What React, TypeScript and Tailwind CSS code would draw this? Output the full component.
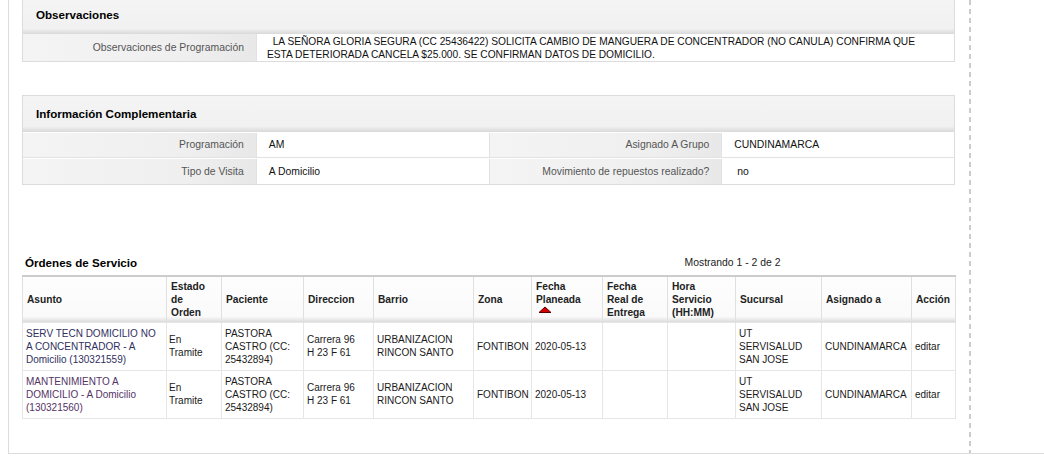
const headers: { label: React.ReactNode; w: string }[] = [
  { label: "Asunto", w: "w-[144px]" },
  { label: <>Estado<br />de<br />Orden</>, w: "w-[55px]" },
  { label: "Paciente", w: "w-[82px]" },
  { label: "Direccion", w: "w-[70px]" },
  { label: "Barrio", w: "w-[100px]" },
  { label: "Zona", w: "w-[58px]" },
  {
    label: (
      <>
        Fecha
        <br />
        Planeada
        <br />
        <svg width="14" height="7" viewBox="0 0 14 7" className="ml-[2px] inline-block align-top">
          <polygon points="1,6.5 7,1 13,6.5" fill="#d40000" stroke="#5a0000" strokeWidth="1" />
        </svg>
      </>
    ),
    w: "w-[71px]",
  },
  { label: <>Fecha<br />Real de<br />Entrega</>, w: "w-[65px]" },
  { label: <>Hora<br />Servicio<br />(HH:MM)</>, w: "w-[68px]" },
  { label: "Sucursal", w: "w-[86px]" },
  { label: "Asignado a", w: "w-[90px]" },
  { label: "Acción", w: "w-[44px]" },
];

const orders = [
  {
    asunto: <>SERV TECN DOMICILIO NO<br />A CONCENTRADOR - A<br />Domicilio (130321559)</>,
    color: "text-[#2f2f60]",
  },
  {
    asunto: <>MANTENIMIENTO A<br />DOMICILIO - A Domicilio<br />(130321560)</>,
    color: "text-[#553366]",
  },
];

const PanelHeader = ({ title, h }: { title: string; h: string }) => (
  <div
    className={`${h} flex items-center pl-[13px] text-[11.6px] font-bold text-black bg-[linear-gradient(to_bottom,#f4f4f4_0%,#f1f1f1_84%,#d9d9d9_100%)]`}
  >
    {title}
  </div>
);

const labelCell =
  "flex items-center justify-end pr-3 text-[10.4px] text-[#555] bg-[linear-gradient(to_right,#f4f4f4_0%,#efefef_70%,#e8e8e8_100%)]";

export default function App() {
  return (
    <div className="h-[467px] bg-white pl-2 font-['Liberation_Sans',Arial,sans-serif]">
      <div className="flex h-[454px] border-l border-b border-[#dcdcdc]">
        <div className="w-[960px] pl-[13px] pr-[14px]">
          {/* Observaciones */}
          <div className="border-x border-b border-[#dcdcdc]">
            <PanelHeader title="Observaciones" h="h-[34px] pb-[4px]" />
            <div className="flex h-[27px]">
              <div className={`w-[233px] ${labelCell}`}>Observaciones de Programación</div>
              <div className="flex-1 border-l border-[#e2e2e2] bg-white pl-[10px] pt-[1px] text-[10.2px] leading-[13px] text-[#111]">
                &nbsp;&nbsp;LA SEÑORA GLORIA SEGURA (CC 25436422) SOLICITA CAMBIO DE MANGUERA DE CONCENTRADOR (NO CANULA) CONFIRMA QUE
                <br />
                ESTA DETERIORADA CANCELA $25.000. SE CONFIRMAN DATOS DE DOMICILIO.
              </div>
            </div>
          </div>

          {/* Información Complementaria */}
          <div className="mt-[33px] border border-[#dcdcdc]">
            <PanelHeader title="Información Complementaria" h="h-[36px]" />
            {[
              ["Programación", "AM", "Asignado A Grupo", "CUNDINAMARCA"],
              ["Tipo de Visita", "A Domicilio", "Movimiento de repuestos realizado?", "\u00a0no"],
            ].map((row, i) => (
              <div key={i} className={`grid h-[26px] grid-cols-4 pt-[1px] ${i === 0 ? "border-b border-[#e2e2e2]" : ""}`}>
                <div className={labelCell}>{row[0]}</div>
                <div className="flex items-center border-l border-[#e2e2e2] pl-3 text-[10.4px] text-[#111]">{row[1]}</div>
                <div className={`${labelCell} border-l border-[#e2e2e2]`}>{row[2]}</div>
                <div className="flex items-center border-l border-[#e2e2e2] pl-3 text-[10.4px] text-[#111]">{row[3]}</div>
              </div>
            ))}
          </div>

          {/* Órdenes de Servicio */}
          <div className="mt-[67px] flex h-[23px] items-center pb-[1px]">
            <div className="flex-1 pl-[3px] text-[11.6px] font-bold text-black">Órdenes de Servicio</div>
            <div className="w-[445px] text-center text-[10.4px] text-[#222]">Mostrando 1 - 2 de 2</div>
          </div>
          <table className="w-[933px] table-fixed border-collapse border-t-2 border-[#cccccc] text-[10px] leading-[13px]">
            <colgroup>
              {headers.map((h, i) => (
                <col key={i} className={h.w} />
              ))}
            </colgroup>
            <thead>
              <tr>
                {headers.map((h, i) => (
                  <th
                    key={i}
                    className="h-[46px] border-x border-[#e0e0e0] pl-1 pt-[1px] text-left align-middle font-bold text-[10.2px] text-[#222] bg-[linear-gradient(to_bottom,#fdfdfd_0%,#fafafa_88%,#dcdcdc_100%)]"
                  >
                    {h.label}
                  </th>
                ))}
              </tr>
            </thead>
            <tbody>
              {orders.map((o, i) => (
                <tr key={i} className="text-[#1a1a1a]">
                  <td className={`border border-[#e6e6e6] py-1 pl-[3px] align-middle ${o.color}`}>{o.asunto}</td>
                  <td className="border border-[#e6e6e6] py-1 pl-[2px] align-middle">En<br />Tramite</td>
                  <td className="border border-[#e6e6e6] py-1 pl-[3px] align-middle">PASTORA<br />CASTRO (CC:<br />25432894)</td>
                  <td className="border border-[#e6e6e6] py-1 pl-[3px] align-middle">Carrera 96<br />H 23 F 61</td>
                  <td className="border border-[#e6e6e6] py-1 pl-[3px] align-middle">URBANIZACION<br />RINCON SANTO</td>
                  <td className="border border-[#e6e6e6] py-1 pl-[3px] align-middle">FONTIBON</td>
                  <td className="border border-[#e6e6e6] py-1 pl-[3px] align-middle">2020-05-13</td>
                  <td className="border border-[#e6e6e6] py-1 pl-[3px] align-middle"></td>
                  <td className="border border-[#e6e6e6] py-1 pl-[3px] align-middle"></td>
                  <td className="border border-[#e6e6e6] py-1 pl-[3px] align-middle">UT<br />SERVISALUD<br />SAN JOSE</td>
                  <td className="border border-[#e6e6e6] py-1 pl-[3px] align-middle">CUNDINAMARCA</td>
                  <td className="border border-[#e6e6e6] py-1 pl-[3px] align-middle">editar</td>
                </tr>
              ))}
            </tbody>
          </table>
        </div>
        <div className="h-full w-[2px] bg-[repeating-linear-gradient(to_bottom,#cccccc_0px,#cccccc_5px,transparent_5px,transparent_9px)]" />
      </div>
    </div>
  );
}
